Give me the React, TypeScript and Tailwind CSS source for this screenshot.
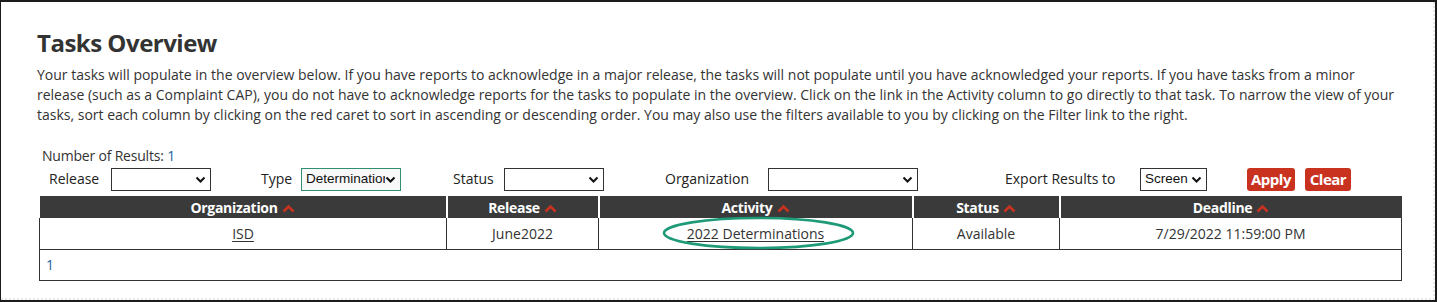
import React from 'react'

function Caret() {
  return (
    <svg width="13" height="9" viewBox="0 0 13 9" className="ml-[4px] inline-block">
      <polyline points="1.5,7.5 6.5,2.5 11.5,7.5" fill="none" stroke="#c8321f" strokeWidth="2.6" />
    </svg>
  )
}

function Chevron() {
  return (
    <svg width="11" height="7" viewBox="0 0 11 7" className="shrink-0">
      <polyline points="1.5,1.5 5.5,5.5 9.5,1.5" fill="none" stroke="#111" strokeWidth="2" />
    </svg>
  )
}

function FakeSelect({ w, value, focused }: { w: string; value?: string; focused?: boolean }) {
  return (
    <div
      className={`${w} flex h-[23px] items-center justify-between overflow-hidden border pr-[4px] pl-[4px] font-['Liberation_Sans',sans-serif] text-[13.5px] text-[#111] ${
        focused ? 'border-[#2f8f73] bg-[#f8f8f8]' : 'border-[#333] bg-white'
      }`}
    >
      <span className="min-w-0 overflow-hidden whitespace-nowrap">{value}</span>
      <Chevron />
    </div>
  )
}

export default function App() {
  return (
    <div className="h-[302px] w-[1437px] border-2 border-l-[1.5px] border-[#1b1b1b] bg-white font-['Open_Sans',sans-serif] text-[#333]">
      <div className="h-full border-r-2 border-b-2 border-dotted border-[#e8e8e8] pt-[25px] pl-[36px]">
        <h1 className="text-[24px] leading-[32px] font-bold tracking-[-0.5px] text-[#333]">Tasks Overview</h1>
        <p className="mt-[6px] w-[1366px] text-[14px] leading-[20px]">
          Your tasks will populate in the overview below. If you have reports to acknowledge in a major release, the tasks will not populate until you have acknowledged your reports. If you have tasks from a minor release (such as a Complaint CAP), you do not have to acknowledge reports for the tasks to populate in the overview. Click on the link in the Activity column to go directly to that task. To narrow the view of your tasks, sort each column by clicking on the red caret to sort in ascending or descending order. You may also use the filters available to you by clicking on the Filter link to the right.
        </p>
        <div className="mt-[22px] ml-[5px] text-[14px] leading-[17px] tracking-[-0.2px]">
          Number of Results: <span className="text-[#1f5f9e]">1</span>
        </div>
        <div className="mt-[4px] flex h-[23px] items-center text-[14px] text-[#222]">
          <span className="ml-[12px] w-[62px] pb-[3px]">Release</span>
          <FakeSelect w="w-[100px]" />
          <span className="ml-[50px] w-[40px] pb-[3px]">Type</span>
          <FakeSelect w="w-[100px]" value="Determinations" focused />
          <span className="ml-[52px] w-[51px] pb-[3px]">Status</span>
          <FakeSelect w="w-[100px]" />
          <span className="ml-[61px] w-[103px] pb-[3px]">Organization</span>
          <FakeSelect w="w-[150px]" />
          <span className="ml-[87px] w-[135px] pb-[3px]">Export Results to</span>
          <FakeSelect w="w-[67px]" value="Screen" />
          <button className="ml-[40px] h-[23px] w-[48px] rounded-[3px] bg-[#c8321f] pb-[1px] text-[15px] font-bold tracking-[-0.5px] text-white">
            Apply
          </button>
          <button className="ml-[10px] h-[23px] w-[46px] rounded-[3px] bg-[#c8321f] pb-[1px] text-[15px] font-bold tracking-[-0.5px] text-white">
            Clear
          </button>
        </div>
        <table className="mt-[5px] ml-[2px] w-[1362px] table-fixed border-collapse text-[14px]">
          <colgroup>
            <col className="w-[407px]" />
            <col className="w-[152px]" />
            <col className="w-[314px]" />
            <col className="w-[147px]" />
            <col className="w-[342px]" />
          </colgroup>
          <thead>
            <tr className="h-[22px] bg-[#3a3a3a] text-white">
              <th className="p-0 text-center font-bold tracking-[-0.3px]">
                Organization<Caret />
              </th>
              <th className="border-l-2 border-white p-0 text-center font-bold tracking-[-0.3px]">
                Release<Caret />
              </th>
              <th className="border-l-2 border-white p-0 text-center font-bold tracking-[-0.3px]">
                Activity<Caret />
              </th>
              <th className="border-l-2 border-white p-0 text-center font-bold tracking-[-0.3px]">
                Status<Caret />
              </th>
              <th className="border-l-2 border-white p-0 text-center font-bold tracking-[-0.3px]">
                Deadline<Caret />
              </th>
            </tr>
          </thead>
          <tbody>
            <tr className="h-[31px]">
              <td className="border border-t-0 border-[#333] p-0 text-center">
                <a href="#" className="text-[#333] underline underline-offset-2">ISD</a>
              </td>
              <td className="border border-t-0 border-[#333] p-0 text-center">June2022</td>
              <td className="relative border border-t-0 border-[#333] p-0 text-center">
                <a href="#" className="text-[#333] underline underline-offset-2">2022 Determinations</a>
                <svg width="193" height="34" viewBox="0 0 193 34" className="absolute top-[-2px] left-[63px]">
                  <ellipse cx="96.5" cy="17" rx="94.5" ry="15" fill="none" stroke="#1e9a78" strokeWidth="2.6" />
                </svg>
              </td>
              <td className="border border-t-0 border-[#333] p-0 text-center">Available</td>
              <td className="border border-t-0 border-[#333] p-0 text-center">7/29/2022 11:59:00 PM</td>
            </tr>
            <tr className="h-[31px]">
              <td colSpan={5} className="border border-[#333] p-0 pl-[6px] text-left">
                <a href="#" className="text-[#1f5f9e]">1</a>
              </td>
            </tr>
          </tbody>
        </table>
      </div>
    </div>
  )
}
